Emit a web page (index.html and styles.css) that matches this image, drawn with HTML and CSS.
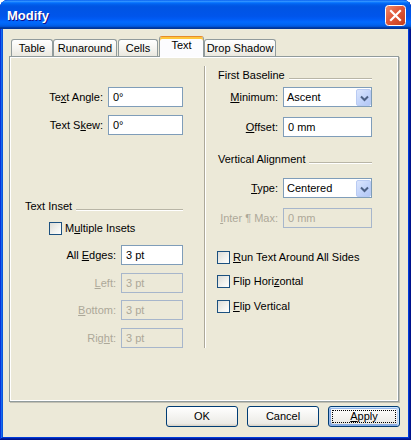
FILE: index.html
```html
<!DOCTYPE html>
<html>
<head>
<meta charset="utf-8">
<title>Modify</title>
<link rel="stylesheet" href="styles.css">
</head>
<body>
<div class="window">
  <div class="titlebar">
    <span class="title">Modify</span>
    <div class="close">
      <svg width="21" height="21" viewBox="0 0 21 21">
        <defs>
          <linearGradient id="cg" x1="0" y1="0" x2="1" y2="1">
            <stop offset="0" stop-color="#F08E6E"/>
            <stop offset="0.45" stop-color="#E0583A"/>
            <stop offset="1" stop-color="#C23C1A"/>
          </linearGradient>
        </defs>
        <rect x="0.5" y="0.5" width="20" height="20" rx="3" fill="url(#cg)" stroke="#fff"/>
        <path d="M6 6 L15 15 M15 6 L6 15" stroke="#fff" stroke-width="2.2" stroke-linecap="square"/>
      </svg>
    </div>
  </div>
  <div class="client">
    <div class="tabs">
      <div class="tab w-table">Table</div>
      <div class="tab w-run">Runaround</div>
      <div class="tab w-cells">Cells</div>
      <div class="tab tab-active w-text">Text</div>
      <div class="tab w-drop">Drop Shadow</div>
    </div>
    <div class="panel">
      <div class="col col-left">
        <div class="row">
          <span class="lbl">Te<u>x</u>t Angle:</span>
          <div class="field w-wide">0°</div>
        </div>
        <div class="row mt-8">
          <span class="lbl">Text S<u>k</u>ew:</span>
          <div class="field w-wide">0°</div>
        </div>
        <div class="heading inset-heading mt-65">
          <span>Text Inset</span><span class="hline"></span>
        </div>
        <div class="checkrow inset-check mt-9">
          <span class="box"></span><span class="lbl">M<u>u</u>ltiple Insets</span>
        </div>
        <div class="row mt-10">
          <span class="lbl">All <u>E</u>dges:</span>
          <div class="field w-short">3 pt</div>
        </div>
        <div class="row mt-8 disabled">
          <span class="lbl"><u>L</u>eft:</span>
          <div class="field w-short">3 pt</div>
        </div>
        <div class="row mt-7 disabled">
          <span class="lbl"><u>B</u>ottom:</span>
          <div class="field w-short">3 pt</div>
        </div>
        <div class="row mt-8 disabled">
          <span class="lbl">Rig<u>h</u>t:</span>
          <div class="field w-short">3 pt</div>
        </div>
      </div>
      <div class="divider"></div>
      <div class="col col-right">
        <div class="heading">
          <span>First Baseline</span><span class="hline"></span>
        </div>
        <div class="row mt-5">
          <span class="lbl"><u>M</u>inimum:</span>
          <div class="field select w-right">
            <span class="seltext">Ascent</span>
            <span class="dropbtn"><svg width="15" height="16" viewBox="0 0 15 16"><path d="M4 6.5 L7.5 10 L11 6.5" fill="none" stroke="#4D6185" stroke-width="2"/></svg></span>
          </div>
        </div>
        <div class="row mt-10">
          <span class="lbl"><u>O</u>ffset:</span>
          <div class="field w-right">0 mm</div>
        </div>
        <div class="heading mt-16">
          <span>Vertical Alignment</span><span class="hline"></span>
        </div>
        <div class="row mt-12">
          <span class="lbl"><u>T</u>ype:</span>
          <div class="field select w-right">
            <span class="seltext">Centered</span>
            <span class="dropbtn"><svg width="15" height="16" viewBox="0 0 15 16"><path d="M4 6.5 L7.5 10 L11 6.5" fill="none" stroke="#4D6185" stroke-width="2"/></svg></span>
          </div>
        </div>
        <div class="row mt-10 disabled">
          <span class="lbl"><u>I</u>nter ¶ Max:</span>
          <div class="field w-right">0 mm</div>
        </div>
        <div class="checkrow right-check mt-23">
          <span class="box"></span><span class="lbl"><u>R</u>un Text Around All Sides</span>
        </div>
        <div class="checkrow right-check mt-11">
          <span class="box"></span><span class="lbl">Flip Hori<u>z</u>ontal</span>
        </div>
        <div class="checkrow right-check mt-12">
          <span class="box"></span><span class="lbl"><u>F</u>lip Vertical</span>
        </div>
      </div>
    </div>
    <div class="buttons">
      <div class="btn">OK</div>
      <div class="btn">Cancel</div>
      <div class="btn btn-default"><u>A</u>pply</div>
    </div>
  </div>
</div>
</body>
</html>
```
FILE: styles.css
```css
* { box-sizing: border-box; }
html, body { margin: 0; padding: 0; }
body {
  width: 411px;
  height: 440px;
  overflow: hidden;
  background: #ffffff;
  font-family: "Liberation Sans", Arial, sans-serif;
  font-size: 11px;
  color: #000;
}
u { text-decoration: underline; text-underline-offset: 1px; }

.window {
  width: 411px;
  height: 440px;
  display: flex;
  flex-direction: column;
  padding: 0 3px 3px 3px;
  border-radius: 8px 8px 0 0;
  background: #0855dd;
  box-shadow: inset -1px -1px #00138c, inset 1px 1px #0831d9, inset -2px -2px #001ea0, inset 2px 2px #166aee, inset -3px -3px #003bda, inset 3px 3px #0855dd;
}

.titlebar {
  margin: 0 -3px;
  height: 29px;
  flex: none;
  display: flex;
  justify-content: space-between;
  align-items: flex-start;
  padding: 0 5px 0 7px;
  border-radius: 8px 8px 0 0;
  background: linear-gradient(180deg, #0058ee 0%, #3593ff 4%, #288eff 6%, #127dff 8%, #036ffc 10%, #0262ee 14%, #0057e5 20%, #0054e3 24%, #0055eb 56%, #005bf5 66%, #026afe 76%, #0062ef 86%, #0052d6 92%, #0040ab 94%, #003092 100%);
}
.title {
  padding-top: 8px;
  font-weight: bold;
  font-size: 13px;
  line-height: 15px;
  color: #fff;
  text-shadow: 1px 1px #0f1089;
}
.close {
  margin-top: 5px;
  width: 21px;
  height: 21px;
}
.close svg { display: block; }

.client {
  flex: 1;
  background: #ECE9D8;
  padding-top: 7px;
  display: flex;
  flex-direction: column;
}

.tabs {
  display: flex;
  align-items: flex-end;
  height: 20px;
  margin-left: 8px;
  position: relative;
  z-index: 1;
}
.tab {
  height: 17px;
  border: 1px solid #919B9C;
  border-bottom: none;
  border-radius: 3px 3px 0 0;
  background: linear-gradient(180deg, #ffffff 0%, #f6f5f1 50%, #eae8df 100%);
  display: flex;
  align-items: center;
  justify-content: center;
  line-height: 13px;
  white-space: nowrap;
}
.w-table { width: 42px; }
.w-run { width: 64px; }
.w-cells { width: 40px; margin-left: 1px; }
.w-text { width: 45px; margin-left: 1px; }
.w-drop { width: 72px; }
.tab-active {
  height: 21px;
  margin-bottom: -1px;
  background: #FCFCFE;
  border-top: 1px solid #E68B2C;
  box-shadow: inset 0 2px 0 #FFC73C;
  padding-bottom: 3px;
}

.panel {
  margin-left: 6px;
  width: 390px;
  height: 346px;
  flex: none;
  border: 1px solid #919B9C;
  box-shadow: 1px 1px 0 #C2C0B3, inset 1px 1px 0 #fff, inset -1px -1px 0 #fff;
  background: #ECE9D8;
  display: grid;
  grid-template-columns: 194px 2px 192px;
  align-items: start;
}

.col { display: flex; flex-direction: column; }
.col-left { padding-top: 30px; padding-right: 21px; }
.col-right { padding-top: 12px; padding-left: 12px; padding-right: 26px; }

.divider {
  margin-top: 9px;
  height: 282px;
  width: 2px;
  border-left: 1px solid #ACA899;
  border-right: 1px solid #ffffff;
}

.row {
  display: flex;
  justify-content: flex-end;
  align-items: center;
  gap: 5px;
  height: 20px;
}
.lbl { white-space: nowrap; line-height: 13px; }

.field {
  height: 20px;
  border: 1px solid #7F9DB9;
  background: #fff;
  padding-left: 4px;
  line-height: 18px;
  white-space: nowrap;
}
.w-wide { width: 75px; }
.w-short { width: 62px; }
.w-right { width: 89px; }

.disabled .lbl { color: #ACA899; }
.disabled .field {
  background: #ECE9D8;
  border-color: #A7B6CB;
  color: #ACA899;
}

.select {
  display: flex;
  padding-left: 3px;
}
.seltext { flex: 1; }
.dropbtn {
  width: 15px;
  height: 17px;
  margin-top: 1px;
  border: 1px solid #B9CBF3;
  border-radius: 2px;
  background: linear-gradient(135deg, #DCE6FD 0%, #C4D5FA 50%, #B3C7F5 100%);
}
.dropbtn svg { display: block; }

.heading {
  display: flex;
  align-items: center;
  height: 13px;
  line-height: 13px;
  white-space: nowrap;
}
.inset-heading { margin-left: 15px; }
.hline {
  flex: 1;
  height: 2px;
  margin-left: 4px;
  margin-top: 6px;
  border-top: 1px solid #B8B5A6;
  border-bottom: 1px solid #ffffff;
}

.checkrow {
  display: flex;
  align-items: center;
  gap: 3px;
  height: 13px;
}
.inset-check { margin-left: 39px; }
.right-check { margin-left: -1px; }
.box {
  width: 13px;
  height: 13px;
  flex: none;
  border: 1px solid #1C5180;
  background: linear-gradient(135deg, #DCDCD7 0%, #F3F3EF 60%, #ffffff 100%);
}

.mt-5 { margin-top: 5px; }
.mt-7 { margin-top: 7px; }
.mt-8 { margin-top: 8px; }
.mt-9 { margin-top: 9px; }
.mt-10 { margin-top: 10px; }
.mt-11 { margin-top: 11px; }
.mt-12 { margin-top: 12px; }
.mt-16 { margin-top: 16px; }
.mt-23 { margin-top: 23px; }
.mt-65 { margin-top: 65px; }

.buttons {
  margin-top: 4px;
  display: flex;
  justify-content: flex-end;
  gap: 9px;
  padding-right: 8px;
}
.btn {
  position: relative;
  width: 72px;
  height: 21px;
  border: 1px solid #003C74;
  border-radius: 3px;
  background: linear-gradient(180deg, #ffffff 0%, #ECEBE6 86%, #D6D0C5 100%);
  display: flex;
  align-items: center;
  justify-content: center;
  line-height: 13px;
}
.btn-default {
  box-shadow: inset -1px 1px #CEE7FF, inset 1px 2px #98B8EA, inset -2px 2px #BCD4F6, inset 1px -1px #89ADE4, inset 2px -2px #89ADE4;
}
.btn-default::after {
  content: "";
  position: absolute;
  left: 3px;
  top: 3px;
  right: 3px;
  bottom: 3px;
  border: 1px dotted #000;
}
```
